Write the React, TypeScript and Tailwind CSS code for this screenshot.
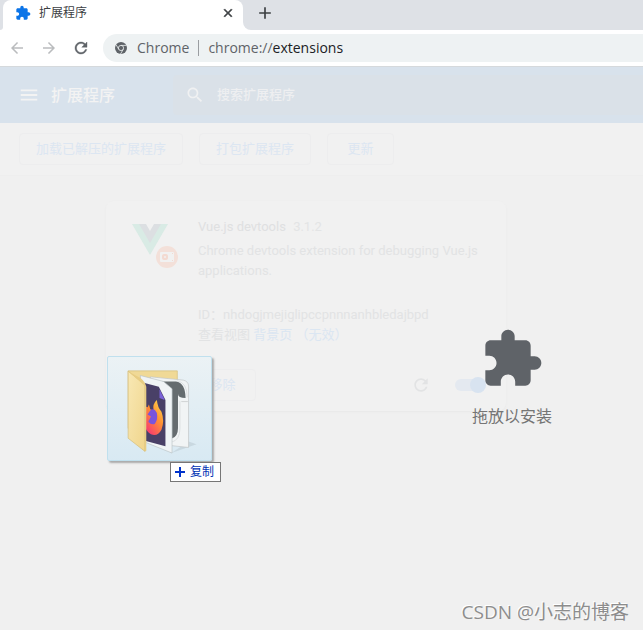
import React, { useState } from 'react';

const PUZZLE_PATH =
  'M20.5 11H19V7c0-1.1-.9-2-2-2h-4V3.5C13 2.12 11.88 1 10.5 1S8 2.12 8 3.5V5H4c-1.1 0-1.99.9-1.99 2v3.8H3.5c1.49 0 2.7 1.21 2.7 2.7s-1.21 2.7-2.7 2.7H2V20c0 1.1.9 2 2 2h3.8v-1.5c0-1.49 1.21-2.7 2.7-2.7 1.49 0 2.7 1.21 2.7 2.7V22H17c1.1 0 2-.9 2-2v-4h1.5c1.38 0 2.5-1.12 2.5-2.5S21.88 11 20.5 11z';
const REFRESH_PATH =
  'M17.65 6.35C16.2 4.9 14.21 4 12 4c-4.42 0-7.99 3.58-7.99 8s3.57 8 7.99 8c3.73 0 6.84-2.55 7.73-6h-2.08c-.82 2.33-3.04 4-5.65 4-3.31 0-6-2.69-6-6s2.69-6 6-6c1.66 0 3.14.69 4.22 1.78L13 11h7V4l-2.35 2.35z';
const BACK_PATH = 'M20 11H7.83l5.59-5.59L12 4l-8 8 8 8 1.41-1.41L7.83 13H20v-2z';
const FORWARD_PATH = 'M12 4l-1.41 1.41L16.17 11H4v2h12.17l-5.58 5.59L12 20l8-8z';
const MENU_PATH = 'M3 18h18v-2H3v2zm0-5h18v-2H3v2zm0-7v2h18V6H3z';
const SEARCH_PATH =
  'M15.5 14h-.79l-.28-.27C15.41 12.59 16 11.11 16 9.5 16 5.91 13.09 3 9.5 3S3 5.91 3 9.5 5.91 16 9.5 16c1.61 0 3.09-.59 4.23-1.57l.27.28v.79l5 4.99L20.49 19l-4.99-5zm-6 0C7.01 14 5 11.99 5 9.5S7.01 5 9.5 5 14 7.01 14 9.5 11.99 14 9.5 14z';
const CLOSE_PATH =
  'M19 6.41L17.59 5 12 10.59 6.41 5 5 6.41 10.59 12 5 17.59 6.41 19 12 13.41 17.59 19 19 17.59 13.41 12z';
const ADD_PATH = 'M19 13h-6v6h-2v-6H5v-2h6V5h2v6h6v2z';

interface IconProps {
  path: string;
  className: string;
}

const Icon: React.FC<IconProps> = ({ path, className }) => (
  <svg viewBox="0 0 24 24" fill="currentColor" className={className} aria-hidden="true">
    <path d={path} />
  </svg>
);

const ChromeLogo = () => (
  <svg viewBox="0 0 24 24" className="size-3 shrink-0" aria-hidden="true">
    <circle cx="12" cy="12" r="12" fill="#5f6368" />
    <g stroke="#eef2f3" strokeWidth="1.6" fill="none">
      <circle cx="12" cy="12" r="5.2" />
      <path d="M12 6.8h11M7.5 14.6L2 5.2M16.5 14.6L11 24" />
    </g>
  </svg>
);

const TabStrip = () => (
  <div className="flex h-[30px] bg-[#dee1e6]">
    <div className="w-[3px] bg-white">
      <div className="h-full rounded-br-lg bg-[#dee1e6]" />
    </div>
    <div className="flex w-60 items-center rounded-t-lg bg-white pr-2 pb-1 pl-3">
      <Icon path={PUZZLE_PATH} className="size-4 text-[#0b74e8]" />
      <span className="ml-2 flex-1 text-xs text-[#3c4043]">扩展程序</span>
      <button type="button" aria-label="关闭标签页" className="text-[#3c4043]">
        <Icon path={CLOSE_PATH} className="size-3.5 stroke-current" />
      </button>
    </div>
    <div className="flex-1 bg-white">
      <div className="flex h-full items-center rounded-bl-lg bg-[#dee1e6] pb-1 pl-3">
        <button type="button" aria-label="新标签页" className="text-[#3c4043]">
          <Icon path={ADD_PATH} className="size-5" />
        </button>
      </div>
    </div>
  </div>
);

const AddressBar = () => (
  <div className="flex h-[37px] items-center border-b border-[#d5d9dc] bg-white pl-2">
    <button type="button" aria-label="后退" className="text-[#babcbe]">
      <Icon path={BACK_PATH} className="size-[18px]" />
    </button>
    <button type="button" aria-label="前进" className="ml-3.5 text-[#babcbe]">
      <Icon path={FORWARD_PATH} className="size-[18px]" />
    </button>
    <button type="button" aria-label="重新加载" className="ml-3.5 text-[#5f6368]">
      <Icon path={REFRESH_PATH} className="size-[18px] stroke-current stroke-[0.5]" />
    </button>
    <div className="ml-[13px] flex h-7 flex-1 items-center rounded-l-full bg-[#eef2f3] pl-3 text-sm text-[#5f6368]">
      <ChromeLogo />
      <span className="ml-2.5">Chrome</span>
      <span className="mx-[9px] h-4 w-px bg-[#9a9da1]" />
      <span>
        chrome://<span className="text-[#202124]">extensions</span>
      </span>
    </div>
  </div>
);

const PageHeader = () => (
  <header className="flex h-14 items-center bg-[#d8e2ec] pl-[18px]">
    <button type="button" aria-label="主菜单" className="text-[#f3f3f3]">
      <Icon path={MENU_PATH} className="size-[22px]" />
    </button>
    <h1 className="ml-[11px] w-[122px] text-base font-medium text-[#f3f3f3]">扩展程序</h1>
    <label className="flex h-10 flex-1 items-center rounded-l bg-[#dae1e8] pl-3">
      <Icon path={SEARCH_PATH} className="size-5 shrink-0 text-[#f0f1f2]" />
      <input
        type="search"
        aria-label="搜索扩展程序"
        placeholder="搜索扩展程序"
        className="ml-3 min-w-0 flex-1 bg-transparent text-[13px] font-medium outline-none placeholder:text-[#eeeff1]"
      />
    </label>
  </header>
);

interface OutlineButtonProps {
  label: string;
}

const OutlineButton: React.FC<OutlineButtonProps> = ({ label }) => (
  <button
    type="button"
    className="h-8 min-w-[67px] rounded border border-[#ededee] px-4 text-[13px] text-[#dce6f2]"
  >
    {label}
  </button>
);

const VueLogo = () => (
  <svg viewBox="0 0 48 48" className="size-12" aria-hidden="true">
    <path d="M0 3h36L18 34z" fill="#d9ebe5" />
    <path d="M7 3h22L18 22z" fill="#dcdfe2" />
    <path d="M14 3h8l-4 7z" fill="#f1f1f1" />
    <circle cx="35" cy="36" r="11" fill="#f3e0d9" />
    <rect x="28" y="31" width="14" height="10" rx="1" fill="#f1f1f1" />
    <rect x="30" y="33" width="6" height="6" rx="2" fill="#f3dad1" />
    <circle cx="33" cy="36" r="1" fill="#f1f1f1" />
    <path d="M40 32h1v1h-1zM40 39h1v1h-1z" fill="#f3dad1" />
  </svg>
);

const ExtensionCard = () => {
  const [enabled, setEnabled] = useState(true);

  return (
    <article className="ml-[106px] w-[400px] rounded-lg bg-[#f1f1f1] shadow-[0_1px_2px_#e8e8e8] [font-family:Roboto,'Noto_Sans_CJK_SC',sans-serif]">
      <div className="flex h-[158px] pt-4 pl-[26px] text-[13px] leading-5 text-[#e2e3e4]">
        <div className="w-[66px] shrink-0 pt-1">
          <VueLogo />
        </div>
        <div>
          <h2 className="text-[#dfe0e1]">
            Vue.js devtools <span className="ml-1 text-[#e3e4e5]">3.1.2</span>
          </h2>
          <p className="mt-1 w-[290px]">Chrome devtools extension for debugging Vue.js applications.</p>
          <p className="mt-6">ID：nhdogjmejiglipccpnnnanhbledajbpd</p>
          <p>
            查看视图{' '}
            <a href="#background" className="text-[#dbe6f2]">
              背景页 （无效）
            </a>
          </p>
        </div>
      </div>
      <div className="flex items-center gap-2 pt-2.5 pr-5 pb-2.5 pl-2">
        <OutlineButton label="详情" />
        <OutlineButton label="移除" />
        <button type="button" aria-label="重新加载扩展程序" className="ml-auto text-[#e2e3e4]">
          <Icon path={REFRESH_PATH} className="size-5" />
        </button>
        <label className="relative ml-4 flex h-4 w-[31px] items-center">
          <input
            type="checkbox"
            role="switch"
            aria-label="启用 Vue.js devtools"
            checked={enabled}
            onChange={(e) => setEnabled(e.target.checked)}
            className="peer sr-only"
          />
          <span className="h-3 w-[26px] rounded-full bg-[#e4e9f0]" />
          <span className="absolute left-0 size-4 rounded-full bg-[#e2e3e4] peer-checked:left-[15px] peer-checked:bg-[#d8e3f0]" />
        </label>
      </div>
    </article>
  );
};

const FolderDrawing = () => (
  <svg viewBox="22 34 312 312" className="size-full" aria-hidden="true">
    <defs>
      <linearGradient id="folderFront" x1="0" y1="0" x2="1" y2="1">
        <stop offset="0" stopColor="#f8e8b4" />
        <stop offset="1" stopColor="#f0d58c" />
      </linearGradient>
      <linearGradient id="flame" x1="1" y1="0" x2="0.3" y2="1">
        <stop offset="0" stopColor="#ffe34f" />
        <stop offset="0.5" stopColor="#ff9033" />
        <stop offset="1" stopColor="#f73d6e" />
      </linearGradient>
    </defs>
    <path d="M214 325L290 298L266 290Z" fill="#bccbd3" opacity="0.6" />
    <path d="M83 76H232V250H83Z" fill="#f0d996" stroke="#d3bc7a" strokeWidth="2" />
    <path d="M150 94L250 104Q266 108 266 122V308L210 302Z" fill="#f1f4f5" stroke="#bfc4c6" strokeWidth="2" />
    <path d="M160 108H228Q256 112 257 158Q234 158 234 146V250Q234 276 214 282V134Z" fill="#656c6f" />
    <path d="M232 106Q262 112 262 156M240 168V250Q240 286 214 292" fill="none" stroke="#d2d6d8" strokeWidth="2" />
    <path d="M244 169H264" stroke="#bfc4c6" strokeWidth="2" />
    <path d="M120 90L190 108L216 130V325L134 292Z" fill="#f0f4f6" stroke="#b9c2c6" strokeWidth="2" />
    <path d="M130 112L176 124L196 164V304L134 288Z" fill="#494067" />
    <path d="M178 132L194 164L178 158Z" fill="#7b62d9" />
    <path
      d="M134 184L142 186L146 178L150 192L160 196Q156 176 170 164Q172 186 184 200Q194 228 184 254Q172 276 152 268Q138 260 134 244Z"
      fill="url(#flame)"
    />
    <path d="M150 196Q162 186 170 204Q174 224 164 236Q154 242 144 230L152 214L142 208Z" fill="#7954dc" />
    <path d="M83 77L134 118V320L83 280Z" fill="url(#folderFront)" stroke="#d3bc7a" strokeWidth="2" />
    <path d="M83 77L106 90Q134 102 138 124V318L134 320V122Z" fill="#e8cd83" />
  </svg>
);

const DragPreview = () => (
  <div className="absolute top-[356px] left-[107px]">
    <div className="size-[105px] rounded-xs border border-[#c0e0ee] bg-linear-to-b from-[#ebf2f5]/95 to-[#d7e9f3]/95 shadow-[2px_2px_2px_#aaa]">
      <FolderDrawing />
    </div>
    <div className="absolute top-[106px] left-[63px] flex h-5 w-[51px] items-center border border-[#767676] bg-white pl-1 text-xs text-[#0033b4]">
      <svg viewBox="0 0 10 10" className="mr-[5px] size-2.5 shrink-0" aria-hidden="true">
        <path d="M4 0h2v4h4v2H6v4H4V6H0V4h4z" fill="#0033cc" />
      </svg>
      <span className="whitespace-nowrap">复制</span>
    </div>
  </div>
);

const DropPrompt = () => (
  <div className="absolute top-[327px] left-[472px] flex flex-col items-center text-[#757575]">
    <Icon path={PUZZLE_PATH} className="size-16 text-[#5f6368]" />
    <p className="mt-[13px] text-base leading-6 whitespace-nowrap">拖放以安装</p>
  </div>
);

const App = () => {
  return (
    <div className="relative min-h-screen overflow-hidden bg-[#f0f0f0] [font-family:'Open_Sans','Noto_Sans_CJK_SC',sans-serif]">
      <TabStrip />
      <AddressBar />
      <PageHeader />
      <main>
        <div className="flex gap-4 border-b border-[#eeeeee] bg-[#f1f1f1] py-2.5 pl-[19px]">
          <OutlineButton label="加载已解压的扩展程序" />
          <OutlineButton label="打包扩展程序" />
          <OutlineButton label="更新" />
        </div>
        <div className="pt-[25px]">
          <ExtensionCard />
        </div>
      </main>
      <DropPrompt />
      <DragPreview />
      <p className="absolute right-3.5 bottom-1 text-[19px] leading-7 whitespace-nowrap text-[#8d8d8d] [text-shadow:-1px_-1px_0_#fff]">
        CSDN @小志的博客
      </p>
    </div>
  );
};

export default App;
